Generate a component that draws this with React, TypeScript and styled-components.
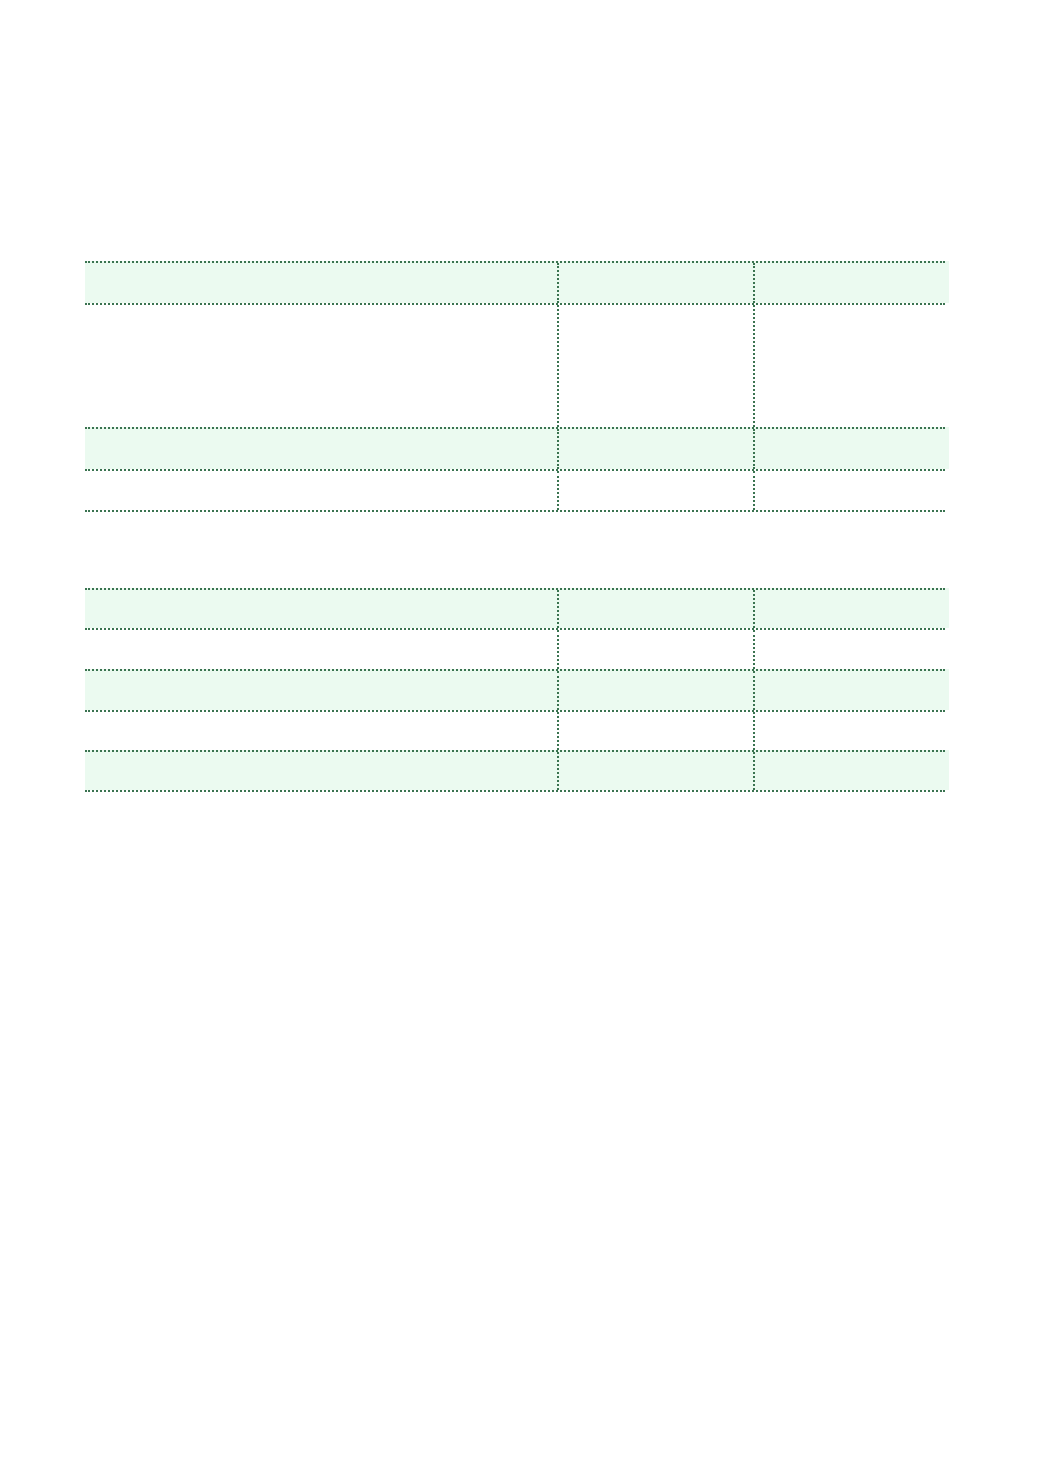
import React from 'react';
import styled, { createGlobalStyle } from 'styled-components';

const GlobalStyle = createGlobalStyle`
  html, body {
    margin: 0;
    padding: 0;
    background: #ffffff;
    font-family: "Liberation Sans", Arial, sans-serif;
  }
`;

const Page = styled.div`
  width: 1038px;
  min-height: 1472px;
  box-sizing: border-box;
  padding: 261px 93px 0 85px;
  display: flex;
  flex-direction: column;
  gap: 76px;
`;

const Table = styled.div`
  display: flex;
  flex-direction: column;
  width: 860px;
  border-bottom: 2px dotted #3a7350;
`;

// shaded rows bleed a few pixels past the right end of the rules
const Row = styled.div<{ $shaded?: boolean; $height: number }>`
  display: grid;
  grid-template-columns: 472px 196px 192px;
  height: ${props => props.$height}px;
  box-sizing: border-box;
  border-top: 2px dotted #3a7350;
  background-color: ${props => props.$shaded ? '#ebfaf0' : 'transparent'};
  box-shadow: ${props => props.$shaded ? '4px 0 0 #ebfaf0' : 'none'};
`;

const Cell = styled.div<{ $divider?: boolean }>`
  box-sizing: border-box;
  padding: 8px 10px;
  font-size: 14px;
  color: #1f2d24;
  border-left: ${props => props.$divider ? '2px dotted #3a7350' : 'none'};
`;

type RowSpec = { shaded: boolean; height: number };

const firstTable: RowSpec[] = [
  { shaded: true, height: 42 },
  { shaded: false, height: 124 },
  { shaded: true, height: 42 },
  { shaded: false, height: 41 },
];

const secondTable: RowSpec[] = [
  { shaded: true, height: 40 },
  { shaded: false, height: 41 },
  { shaded: true, height: 41 },
  { shaded: false, height: 40 },
  { shaded: true, height: 40 },
];

function GridTable({ rows }: { rows: RowSpec[] }) {
  return (
    <Table>
      {rows.map((row, i) => (
        <Row key={i} $shaded={row.shaded} $height={row.height}>
          <Cell />
          <Cell $divider />
          <Cell $divider />
        </Row>
      ))}
    </Table>
  );
}

export default function App() {
  return (
    <>
      <GlobalStyle />
      <Page>
        <GridTable rows={firstTable} />
        <GridTable rows={secondTable} />
      </Page>
    </>
  );
}
